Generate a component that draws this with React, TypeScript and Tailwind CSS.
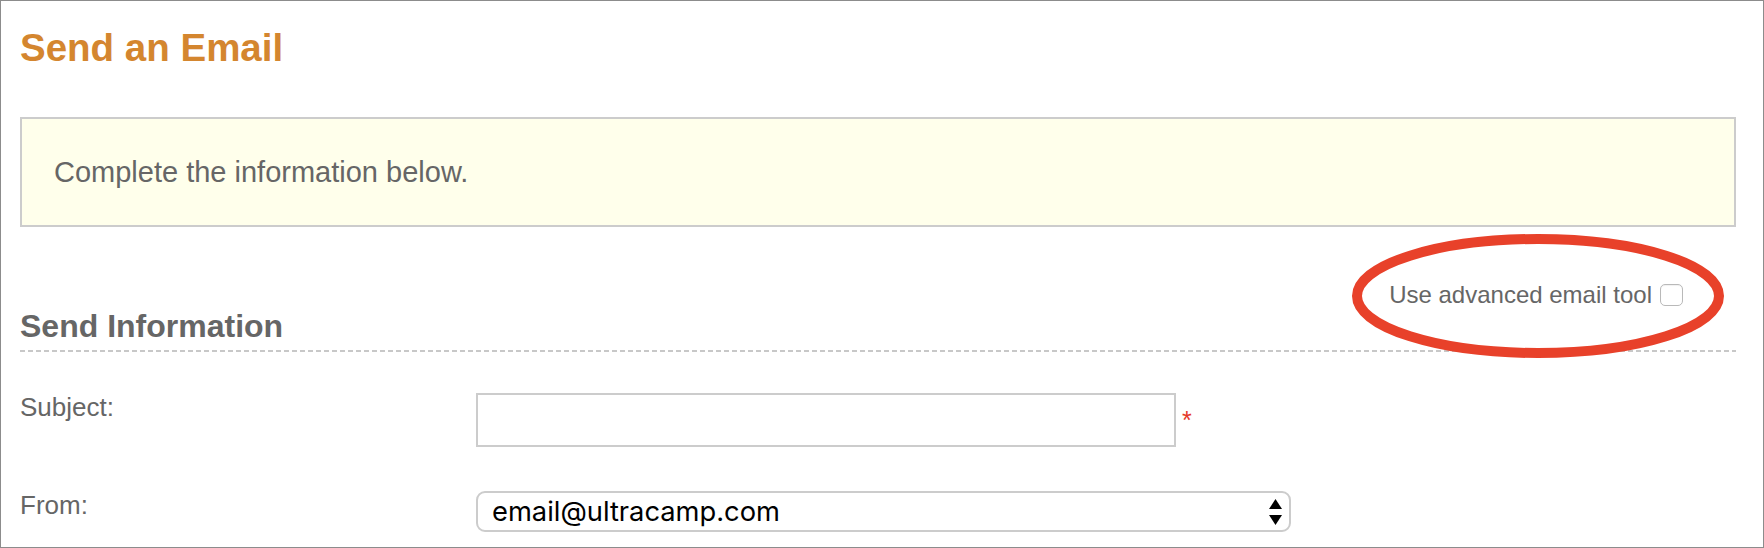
export default function App() {
  return (
    <div className="relative w-[1764px] h-[548px] border border-[#8c8c8c] bg-white pl-[19px] pr-[27px] pt-[25px] font-['Liberation_Sans',Arial,sans-serif] text-[#666666] overflow-hidden">
      <h1 className="text-[38.5px] leading-[44px] font-bold text-[#d4862f]">Send an Email</h1>

      <div className="mt-[47px] h-[110px] border-2 border-[#cccccc] bg-[#ffffeb] pl-[32px] flex items-center">
        <p className="text-[29px] leading-[33px]">Complete the information below.</p>
      </div>

      <div className="mt-[54px] flex items-start justify-between">
        <h2 className="mt-[27px] pb-[5px] text-[32px] leading-[37px] font-bold text-[#666666]">Send Information</h2>
        <label className="mr-[53px] flex items-center gap-[8px] text-[24px] leading-[28px] text-[#666666]">
          <span>Use advanced email tool</span>
          <span className="block w-[23px] h-[22px] rounded-[5px] border-[1.5px] border-[#b9b9b9] bg-white shadow-[inset_0_1px_1px_rgba(0,0,0,0.06)]" />
        </label>
      </div>
      <div className="h-[2px] bg-[repeating-linear-gradient(90deg,#c8c8c8_0_5px,transparent_5px_8px)]" />

      <div className="mt-[41px] grid grid-cols-[456px_1fr] gap-y-[44px]">
        <div className="text-[26px] leading-[29px]">Subject:</div>
        <div className="flex items-center">
          <div className="w-[700px] h-[54px] border-2 border-[#cccccc] bg-white" />
          <span className="ml-[6px] text-[25px] leading-[29px] text-[#e5392a]">*</span>
        </div>

        <div className="text-[26px] leading-[29px]">From:</div>
        <div className="flex">
          <div className="w-[815px] h-[41px] rounded-[9px] border-2 border-[#cccccc] bg-white flex items-center justify-between pl-[14px] pr-[7px]">
            <span className="font-['Inter',sans-serif] text-[27.3px] leading-[30px] text-black">email@ultracamp.com</span>
            <svg width="13" height="26" viewBox="0 0 13 26" className="block">
              <polygon points="6.5,0 13,10 0,10" fill="#000" />
              <polygon points="0,16 13,16 6.5,26" fill="#000" />
            </svg>
          </div>
        </div>
      </div>

      <svg
        className="absolute left-[1346px] top-[228px] pointer-events-none"
        width="382"
        height="134"
        viewBox="0 0 382 134"
      >
        <ellipse cx="191" cy="67" rx="181" ry="57" fill="none" stroke="#e8412a" strokeWidth="10" />
      </svg>
    </div>
  );
}
